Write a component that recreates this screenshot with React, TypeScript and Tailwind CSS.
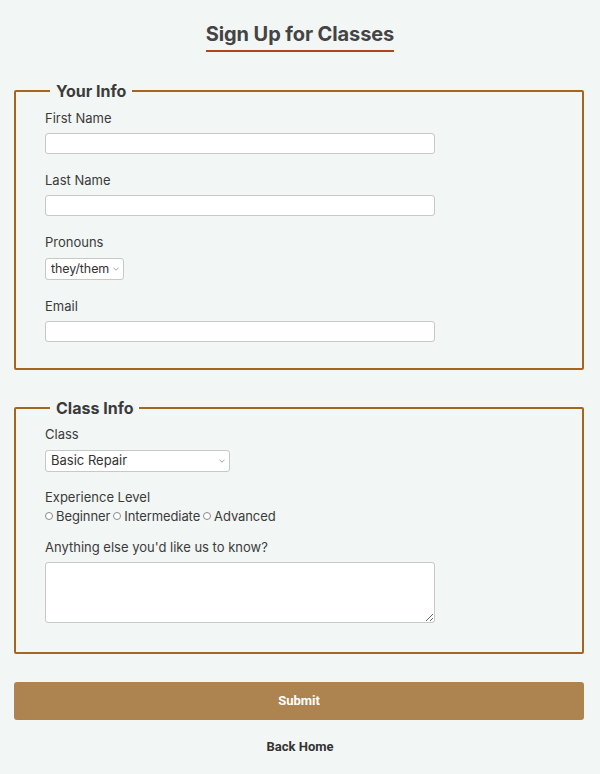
import React from 'react';

const Chevron: React.FC = () => (
  <svg
    className="pointer-events-none absolute right-[5px] top-1/2 -translate-y-1/2"
    width="6"
    height="4"
    viewBox="0 0 6 4"
    fill="none"
  >
    <path d="M0.5 0.8 L3 3.2 L5.5 0.8" stroke="#999" strokeWidth="0.9" />
  </svg>
);

const TextField: React.FC<{ label: string; last?: boolean }> = ({ label, last }) => (
  <div className={last ? '' : 'mb-[18px]'}>
    <label className="mb-[7px] block text-[13px] leading-[16px] text-[#3b3b3b]">{label}</label>
    <input
      type="text"
      className="block h-[21px] w-[390px] rounded-[3px] border border-[#c8c8c8] bg-white px-1 text-[13px]"
    />
  </div>
);

const App: React.FC = () => {
  return (
    <div className="min-h-[774px] bg-[#f2f6f5] pb-[18px] font-['Inter','Noto_Sans',sans-serif] text-[#3b3b3b]">
      {/* Heading */}
      <div className="flex justify-center pt-[21px]">
        <h1 className="border-b-2 border-[#a9471f] pb-[3px] text-[20px] leading-[26px] font-bold tracking-[-0.1px] text-[#444]">
          Sign Up for Classes
        </h1>
      </div>

      <form className="mt-[29px] pl-[14px] pr-[16px]">
        {/* Your Info */}
        <fieldset className="rounded-[2px] border-2 border-[#a6651f] px-[29px] pt-[9px] pb-[26px]">
          <legend className="ml-[5px] px-[6px] text-[16px] leading-[20px] font-bold text-[#3b3b3b]">Your Info</legend>
          <TextField label="First Name" />
          <TextField label="Last Name" />
          <div className="mb-[18px]">
            <label className="mb-[8px] block text-[13px] leading-[16px]">Pronouns</label>
            <div className="relative w-fit">
              <select className="block h-[22px] w-[79px] appearance-none rounded-[3px] border border-[#c8c8c8] bg-white pl-[5px] text-[12.5px] tracking-[-0.1px] text-[#333]">
                <option>they/them</option>
                <option>she/her</option>
                <option>he/him</option>
              </select>
              <Chevron />
            </div>
          </div>
          <TextField label="Email" last />
        </fieldset>

        {/* Class Info */}
        <fieldset className="mt-[28px] rounded-[2px] border-2 border-[#a6651f] px-[29px] pt-[8px] pb-[29px]">
          <legend className="ml-[5px] px-[6px] text-[16px] leading-[20px] font-bold text-[#3b3b3b]">Class Info</legend>
          <div className="mb-[17px]">
            <label className="mb-[8px] block text-[13px] leading-[16px]">Class</label>
            <div className="relative w-fit">
              <select className="block h-[22px] w-[185px] appearance-none rounded-[3px] border border-[#c8c8c8] bg-white pl-[5px] text-[13px] text-[#333]">
                <option>Basic Repair</option>
                <option>Tune Up</option>
                <option>Wheel Building</option>
              </select>
              <Chevron />
            </div>
          </div>
          <div className="mb-[14px]">
            <label className="block text-[13px] leading-[16px]">Experience Level</label>
            <div className="mt-[2px] flex items-center text-[13px] leading-[18px] tracking-[-0.1px]">
              {['Beginner', 'Intermediate', 'Advanced'].map((lvl) => (
                <label key={lvl} className="mr-[3px] flex items-center">
                  <input
                    type="radio"
                    name="level"
                    className="mr-[3px] h-[8px] w-[8px] appearance-none rounded-full border border-[#8a8a8a] bg-white"
                  />
                  {lvl}
                </label>
              ))}
            </div>
          </div>
          <div>
            <label className="mb-[7px] block text-[13px] leading-[16px]">Anything else you'd like us to know?</label>
            <textarea className="block h-[61px] w-[390px] rounded-[3px] border border-[#c8c8c8] bg-white p-1 text-[13px]" />
          </div>
        </fieldset>

        <button
          type="button"
          className="mt-[28px] block h-[38px] w-full rounded-[3px] bg-[#ad8450] font-['Roboto',sans-serif] text-[13px] font-bold text-white"
        >
          Submit
        </button>
      </form>

      <div className="mt-[13px] text-center">
        <a href="#" className="font-['Roboto',sans-serif] text-[13px] font-bold text-[#333]">
          Back Home
        </a>
      </div>
    </div>
  );
};

export default App;
